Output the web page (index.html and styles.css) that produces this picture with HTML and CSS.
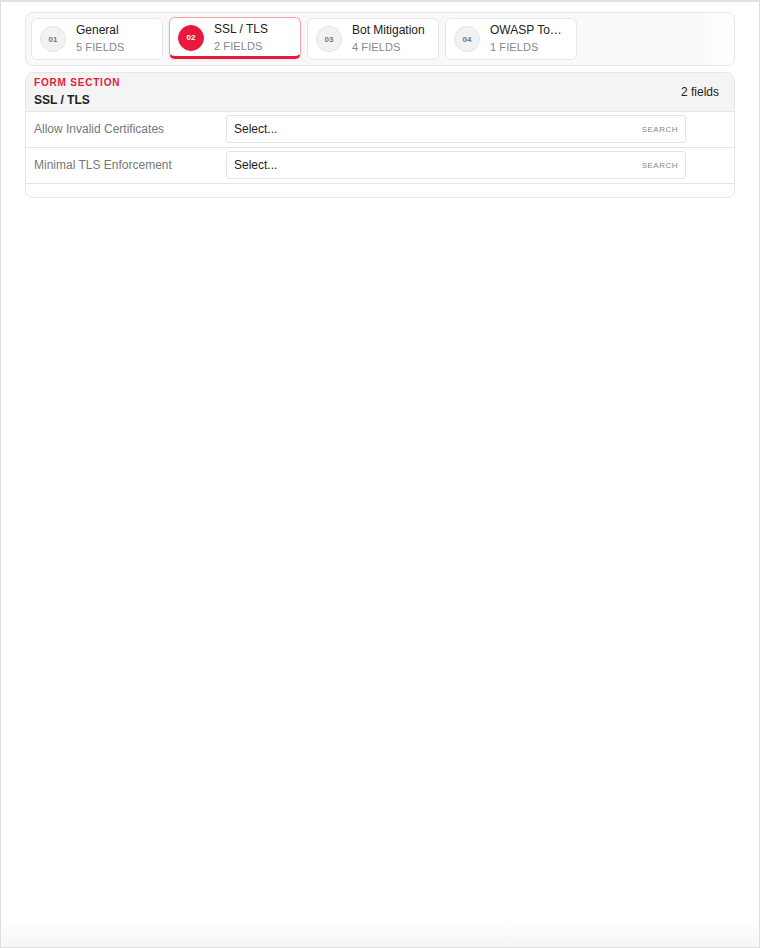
FILE: index.html
```html
<!DOCTYPE html>
<html>
<head>
<meta charset="utf-8">
<link rel="stylesheet" href="styles.css">
</head>
<body>
<div class="frame">
  <div class="tabbar">
    <div class="tabs">
      <div class="tab">
        <span class="num">01</span>
        <div class="tab-text"><div class="tab-title">General</div><div class="tab-sub">5 FIELDS</div></div>
      </div>
      <div class="tab active">
        <span class="num">02</span>
        <div class="tab-text"><div class="tab-title">SSL / TLS</div><div class="tab-sub">2 FIELDS</div></div>
      </div>
      <div class="tab">
        <span class="num">03</span>
        <div class="tab-text"><div class="tab-title">Bot Mitigation</div><div class="tab-sub">4 FIELDS</div></div>
      </div>
      <div class="tab">
        <span class="num">04</span>
        <div class="tab-text"><div class="tab-title">OWASP To…</div><div class="tab-sub">1 FIELDS</div></div>
      </div>
    </div>
    <div class="fade"></div>
  </div>

  <div class="section">
    <div class="section-head">
      <div>
        <div class="eyebrow">FORM SECTION</div>
        <div class="section-title">SSL / TLS</div>
      </div>
      <div class="count">2 fields</div>
    </div>
    <div class="row">
      <div class="label">Allow Invalid Certificates</div>
      <div class="select"><span class="ph">Select...</span><span class="search">SEARCH</span></div>
    </div>
    <div class="row">
      <div class="label">Minimal TLS Enforcement</div>
      <div class="select"><span class="ph">Select...</span><span class="search">SEARCH</span></div>
    </div>
    <div class="section-foot"></div>
  </div>
</div>
</body>
</html>
```
FILE: styles.css
```css
* { box-sizing: border-box; }
html, body { margin: 0; padding: 0; }
body {
  font-family: "Liberation Sans", Arial, sans-serif;
  color: #222;
  background: #fff;
}
.frame {
  height: 948px;
  border: 1px solid #dedede;
  border-top: 2px solid #e2e2e2;
  padding: 10px 24px 0 24px;
  background: linear-gradient(to bottom, #fff 0, #fff 915px, #f5f5f5 946px);
}
.tabbar {
  position: relative;
  height: 54px;
  border: 1px solid #e6e6e6;
  border-radius: 8px;
  background: #f9f9f9;
  padding: 5px;
  overflow: hidden;
}
.tabs {
  display: flex;
  gap: 6px;
}
.tab {
  width: 132px;
  height: 42px;
  flex: none;
  display: flex;
  align-items: center;
  gap: 10px;
  padding-left: 8px;
  background: #fff;
  border: 1px solid #e6e6e6;
  border-radius: 6px;
}
.num {
  width: 26px;
  height: 26px;
  flex: none;
  border-radius: 50%;
  background: #f2f2f2;
  border: 1px solid #e4e4e4;
  color: #777;
  font-size: 8px;
  font-weight: bold;
  display: flex;
  align-items: center;
  justify-content: center;
}
.tab-text { display: flex; flex-direction: column; margin-top: 2px; }
.tab-title {
  font-size: 12px;
  line-height: 14px;
  color: #222;
  white-space: nowrap;
}
.tab-sub {
  font-size: 11px;
  line-height: 20px;
  color: #888;
  letter-spacing: 0.1px;
}
.tab.active {
  border-color: #f1a3ae;
  border-bottom: 3px solid #e8193c;
  transform: translateY(-1px);
  box-shadow: 0 1px 3px rgba(0,0,0,0.08);
  padding-top: 1px;
}
.tab.active .num {
  background: #e8193c;
  border-color: #e8193c;
  color: #fff;
}
.fade {
  position: absolute;
  top: 0;
  right: 0;
  width: 40px;
  height: 100%;
  background: linear-gradient(to right, rgba(255,255,255,0), #ffffff);
}
.section {
  margin-top: 6px;
  border: 1px solid #e6e6e6;
  border-radius: 8px;
  overflow: hidden;
}
.section-head {
  display: flex;
  justify-content: space-between;
  align-items: center;
  background: #f4f4f4;
  border-bottom: 1px solid #e6e6e6;
  padding: 3px 15px 1px 8px;
}
.eyebrow {
  font-size: 10px;
  line-height: 14px;
  font-weight: bold;
  color: #e8193c;
  letter-spacing: 0.8px;
}
.section-title {
  font-size: 12px;
  line-height: 20px;
  font-weight: bold;
  color: #222;
}
.count {
  font-size: 12px;
  color: #222;
  margin-bottom: 2px;
}
.row {
  display: grid;
  grid-template-columns: 192px 1fr;
  align-items: center;
  padding: 3px 48px 4px 8px;
  border-bottom: 1px solid #e6e6e6;
}
.label {
  font-size: 12px;
  color: #777;
}
.select {
  height: 28px;
  border: 1px solid #e4e4e4;
  border-radius: 3px;
  display: flex;
  align-items: center;
  justify-content: space-between;
  padding: 0 7px 0 7px;
  background: #fff;
}
.ph { font-size: 12px; color: #222; }
.search { font-size: 8px; color: #888; letter-spacing: 0.5px; }
.section-foot { height: 13px; }
```
